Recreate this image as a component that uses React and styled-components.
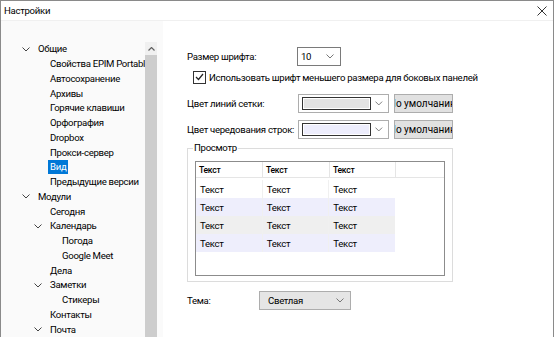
import styled, { createGlobalStyle } from "styled-components";

const Global = createGlobalStyle`
  html, body { margin: 0; padding: 0; background: #fff; }
  body {
    font-family: Roboto, "Noto Sans", sans-serif;
    font-size: 9.6px;
    letter-spacing: -0.3px;
    color: #000;
  }
`;

const Window = styled.div`
  width: 554px;
  height: 337px;
  box-sizing: border-box;
  border: 1px solid #8a8a8a;
  border-bottom: none;
  display: flex;
  flex-direction: column;
  overflow: hidden;
  background: #fff;
`;

const TitleBar = styled.div`
  height: 19px;
  flex: none;
  display: flex;
  align-items: center;
  justify-content: space-between;
  padding: 0 6px 0 3px;
  border-bottom: 1px solid #f0f0f0;
`;

const Body = styled.div`
  flex: 1;
  display: flex;
  min-height: 0;
`;

const Sidebar = styled.div`
  width: 162px;
  flex: none;
  background: #fafafa;
  display: flex;
  padding: 21px 6px 0 0;
  box-sizing: border-box;
`;

const Tree = styled.div`
  width: 145px;
  overflow: hidden;
  display: flex;
  flex-direction: column;
`;

const TreeRow = styled.div`
  height: 15px;
  display: flex;
  align-items: center;
  padding-left: ${(p) => 21 + p.$level * 12}px;
  white-space: nowrap;
`;

const Toggle = styled.span`
  width: 16px;
  flex: none;
  display: flex;
  align-items: center;
`;

const Label = styled.span`
  padding: 0 2px;
  margin-left: -2px;
  line-height: 14px;
  background: ${(p) => (p.$selected ? "#0078d7" : "transparent")};
  color: ${(p) => (p.$selected ? "#fff" : "#000")};
`;

const ScrollBar = styled.div`
  width: 12px;
  flex: none;
  background: #f0f0f0;
  display: flex;
  flex-direction: column;
`;

const ScrollArrow = styled.div`
  height: 13px;
  display: flex;
  align-items: center;
  justify-content: center;
`;

const ScrollThumb = styled.div`
  flex: 1;
  background: #cdcdcd;
`;

const Content = styled.div`
  flex: 1;
  padding: 26px 0 0 24px;
  display: flex;
  flex-direction: column;
  white-space: nowrap;
`;

const FieldRow = styled.div`
  display: flex;
  align-items: center;
  height: 19px;
  margin-bottom: ${(p) => p.$gap || 0}px;
`;

const FieldLabel = styled.span`
  width: ${(p) => p.$w}px;
  flex: none;
`;

const Select = styled.div`
  width: ${(p) => p.$w}px;
  height: 19px;
  box-sizing: border-box;
  border: 1px solid ${(p) => (p.$flat ? "#adadad" : "#7a7a7a")};
  background: ${(p) => (p.$flat ? "#e5e5e5" : "#fff")};
  display: flex;
  align-items: center;
  justify-content: space-between;
  padding: 0 6px 0 ${(p) => (p.$flat ? 8 : 3)}px;
`;

const ColorBox = styled.div`
  width: 91px;
  height: 19px;
  box-sizing: border-box;
  border: 1px solid #adadad;
  background: #fff;
  display: flex;
  align-items: center;
  padding: 0 5px 0 3px;
  gap: 4px;
`;

const Swatch = styled.div`
  width: 71px;
  height: 11px;
  border: 1px solid #333;
  box-shadow: inset 0 0 0 1px #fff;
  background: ${(p) => p.$color};
`;

const Button = styled.div`
  width: 59px;
  height: 19px;
  box-sizing: border-box;
  margin-left: 5px;
  border: 1px solid #adadad;
  background: #e1e1e1;
  display: flex;
  align-items: center;
  justify-content: center;
  overflow: hidden;
  font-size: 10px;
  letter-spacing: 0;
`;

const CheckRow = styled.div`
  display: flex;
  align-items: center;
  gap: 3px;
  height: 16px;
  margin: 3px 0 9px 6px;
`;

const CheckBox = styled.div`
  width: 11px;
  height: 11px;
  border: 1px solid #333;
  display: flex;
  align-items: center;
  justify-content: center;
`;

const Group = styled.div`
  position: relative;
  width: 266px;
  height: 134px;
  box-sizing: border-box;
  border: 1px solid #dcdcdc;
  margin-top: 9px;
  padding: 12px 7px 0 7px;
`;

const Legend = styled.span`
  position: absolute;
  top: -7px;
  left: 5px;
  background: #fff;
  padding: 0 1px;
`;

const List = styled.div`
  height: 115px;
  box-sizing: border-box;
  border: 1px solid #8c8c8c;
  display: flex;
  flex-direction: column;
`;

const Header = styled.div`
  display: flex;
  height: 15px;
  border-bottom: 1px solid #e5e5e5;
  font-size: 8.6px;
  font-weight: 500;
  margin-bottom: 2px;
`;

const HeadCell = styled.div`
  width: ${(p) => p.$w}px;
  box-sizing: border-box;
  padding-left: 3px;
  display: flex;
  align-items: center;
  border-right: 1px solid #e5e5e5;
`;

const Row = styled.div`
  display: flex;
  width: 199px;
  height: 18px;
  background: ${(p) => p.$bg};
`;

const Cell = styled.div`
  width: ${(p) => p.$w}px;
  box-sizing: border-box;
  padding-left: 4px;
  display: flex;
  align-items: center;
  border-right: 1px solid #f0f0f0;
  &:last-child { border-right: none; }
`;

const ThemeRow = styled(FieldRow)`
  margin-top: 9px;
`;

const Chevron = ({ color = "#555" }) => (
  <svg width="8" height="5" viewBox="0 0 8 5">
    <path d="M0.5 0.5 L4 4 L7.5 0.5" fill="none" stroke={color} strokeWidth="1" />
  </svg>
);

const tree = [
  { t: "Общие", l: 0, open: true },
  { t: "Свойства EPIM Portable", l: 1 },
  { t: "Автосохранение", l: 1 },
  { t: "Архивы", l: 1 },
  { t: "Горячие клавиши", l: 1 },
  { t: "Орфография", l: 1 },
  { t: "Dropbox", l: 1 },
  { t: "Прокси-сервер", l: 1 },
  { t: "Вид", l: 1, sel: true },
  { t: "Предыдущие версии", l: 1 },
  { t: "Модули", l: 0, open: true },
  { t: "Сегодня", l: 1 },
  { t: "Календарь", l: 1, open: true },
  { t: "Погода", l: 2 },
  { t: "Google Meet", l: 2 },
  { t: "Дела", l: 1 },
  { t: "Заметки", l: 1, open: true },
  { t: "Стикеры", l: 2 },
  { t: "Контакты", l: 1 },
  { t: "Почта", l: 1, open: true },
];

const cols = [67, 67, 66];
const rows = ["#fff", "#eeeefc", "#efefef", "#eeeefc"];

export default function App() {
  return (
    <Window>
      <Global />
      <TitleBar>
        <span>Настройки</span>
        <svg width="10" height="10" viewBox="0 0 10 10">
          <path d="M0.5 0.5 L9.5 9.5 M9.5 0.5 L0.5 9.5" stroke="#333" strokeWidth="1" />
        </svg>
      </TitleBar>
      <Body>
        <Sidebar>
          <Tree>
            {tree.map((n, i) => (
              <TreeRow key={i} $level={n.l}>
                <Toggle>{n.open && <Chevron color="#444" />}</Toggle>
                <Label $selected={n.sel}>{n.t}</Label>
              </TreeRow>
            ))}
          </Tree>
          <ScrollBar>
            <ScrollArrow>
              <svg width="7" height="4" viewBox="0 0 7 4">
                <path d="M0.5 3.5 L3.5 0.5 L6.5 3.5" fill="none" stroke="#606060" strokeWidth="1.2" />
              </svg>
            </ScrollArrow>
            <ScrollThumb />
          </ScrollBar>
        </Sidebar>
        <Content>
          <FieldRow>
            <FieldLabel $w={110}>Размер шрифта:</FieldLabel>
            <Select $w={44}>
              <span>10</span>
              <Chevron color="#777" />
            </Select>
          </FieldRow>
          <CheckRow>
            <CheckBox>
              <svg width="9" height="8" viewBox="0 0 9 8">
                <path d="M1 4 L3.5 6.5 L8 1" fill="none" stroke="#222" strokeWidth="1.2" />
              </svg>
            </CheckBox>
            <span>Использовать шрифт меньшего размера для боковых панелей</span>
          </CheckRow>
          <FieldRow $gap={7}>
            <FieldLabel $w={111}>Цвет линий сетки:</FieldLabel>
            <ColorBox>
              <Swatch $color="#e3e3e3" />
              <Chevron color="#777" />
            </ColorBox>
            <Button>По умолчанию</Button>
          </FieldRow>
          <FieldRow>
            <FieldLabel $w={111}>Цвет чередования строк:</FieldLabel>
            <ColorBox>
              <Swatch $color="#ededfc" />
              <Chevron color="#777" />
            </ColorBox>
            <Button>По умолчанию</Button>
          </FieldRow>
          <Group>
            <Legend>Просмотр</Legend>
            <List>
              <Header>
                {cols.map((w, i) => (
                  <HeadCell key={i} $w={w}>Текст</HeadCell>
                ))}
              </Header>
              {rows.map((bg, r) => (
                <Row key={r} $bg={bg}>
                  {cols.map((w, i) => (
                    <Cell key={i} $w={w}>Текст</Cell>
                  ))}
                </Row>
              ))}
            </List>
          </Group>
          <ThemeRow>
            <FieldLabel $w={72}>Тема:</FieldLabel>
            <Select $w={92} $flat>
              <span>Светлая</span>
              <Chevron color="#777" />
            </Select>
          </ThemeRow>
        </Content>
      </Body>
    </Window>
  );
}
